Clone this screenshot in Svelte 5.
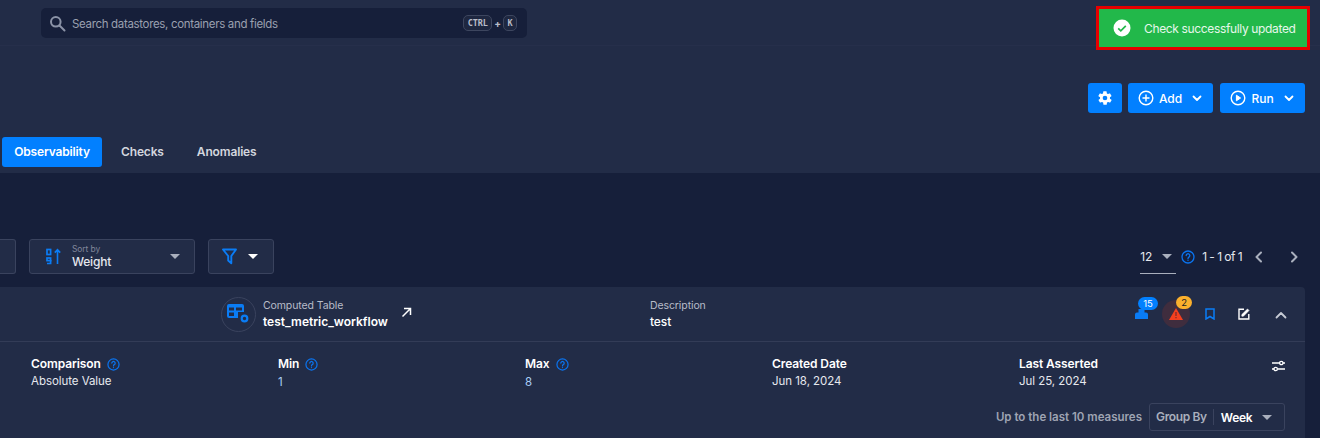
<script>
  const details = [
    { label: 'Comparison', value: 'Absolute Value', help: true },
    { label: 'Min', value: '1', help: true, link: true },
    { label: 'Max', value: '8', help: true, link: true },
    { label: 'Created Date', value: 'Jun 18, 2024' },
    { label: 'Last Asserted', value: 'Jul 25, 2024' }
  ];
</script>

{#snippet help(size)}
  <svg class="help" width={size} height={size} viewBox="0 0 14 14" fill="none" stroke="#0a74f0" stroke-width="1.3">
    <circle cx="7" cy="7" r="6" />
    <path d="M5.2 5.5a1.8 1.8 0 1 1 2.7 1.6c-.6.4-.9.7-.9 1.4" stroke-linecap="round" />
    <circle cx="7" cy="10.3" r=".7" fill="#0a74f0" stroke="none" />
  </svg>
{/snippet}

{#snippet chevron()}
  <svg width="12" height="12" viewBox="0 0 12 12" fill="none" stroke="#fff" stroke-width="1.8" stroke-linecap="round" stroke-linejoin="round">
    <path d="M2.5 4.5 6 8l3.5-3.5" />
  </svg>
{/snippet}

<div class="page">
  <header class="topbar">
    <div class="search">
      <svg width="17" height="17" viewBox="0 0 17 17" fill="none" stroke="#8b93a7" stroke-width="2">
        <circle cx="6.8" cy="6.8" r="4.8" />
        <path d="m10.5 10.5 5 5" stroke-linecap="round" />
      </svg>
      <span class="search-text">Search datastores, containers and fields</span>
      <span class="keys">
        <kbd>CTRL</kbd><i>+</i><kbd>K</kbd>
      </span>
    </div>
  </header>

  <section class="head">
    <div class="actions">
      <button class="btn icon-only" aria-label="Settings">
        <svg width="16" height="16" viewBox="0 0 24 24" fill="#fff">
          <path fill-rule="evenodd" d="M19.4 13a7.6 7.6 0 0 0 0-2l2.1-1.6a.5.5 0 0 0 .1-.7l-2-3.4a.5.5 0 0 0-.6-.2l-2.5 1a7.4 7.4 0 0 0-1.7-1l-.4-2.7a.5.5 0 0 0-.5-.4h-4a.5.5 0 0 0-.5.4l-.4 2.7a7.4 7.4 0 0 0-1.7 1l-2.5-1a.5.5 0 0 0-.6.2l-2 3.4a.5.5 0 0 0 .1.7L4.6 11a7.6 7.6 0 0 0 0 2l-2.1 1.6a.5.5 0 0 0-.1.7l2 3.4c.1.2.4.3.6.2l2.5-1c.5.4 1.1.7 1.7 1l.4 2.7c0 .2.3.4.5.4h4c.2 0 .5-.2.5-.4l.4-2.7c.6-.3 1.2-.6 1.7-1l2.5 1c.2.1.5 0 .6-.2l2-3.4a.5.5 0 0 0-.1-.7ZM12 15.5a3.5 3.5 0 1 1 0-7 3.5 3.5 0 0 1 0 7Z" />
        </svg>
      </button>
      <button class="btn">
        <svg width="16" height="16" viewBox="0 0 16 16" fill="none" stroke="#fff" stroke-width="1.4">
          <circle cx="8" cy="8" r="6.8" />
          <path d="M8 4.5v7M4.500 8h7" />
        </svg>
        <span>Add</span>
        {@render chevron()}
      </button>
      <button class="btn run">
        <svg width="16" height="16" viewBox="0 0 16 16" fill="none" stroke="#fff" stroke-width="1.4">
          <circle cx="8" cy="8" r="6.8" />
          <path d="M6.400 5.200v5.600L10.600 8Z" fill="#fff" stroke-linejoin="round" stroke-width="1" />
        </svg>
        <span>Run</span>
        {@render chevron()}
      </button>
    </div>
    <nav class="tabs">
      <span class="tab active">Observability</span>
      <span class="tab">Checks</span>
      <span class="tab">Anomalies</span>
    </nav>
  </section>

  <main class="body">
    <div class="toolbar">
      <div class="box stub"></div>
      <div class="box sort">
        <svg width="16" height="17" viewBox="0 0 16 17" fill="none" stroke="#0a7cf5">
          <rect x="1" y="1.500" width="3.600" height="5" stroke-width="1.700" />
          <rect x="1" y="10" width="3.600" height="2.600" stroke-width="1.700" />
          <path d="M4.600 12v3.500H1" stroke-width="1.700" />
          <path d="M11.500 16V2M8.800 4.600l2.700-3 2.700 3" stroke-width="1.600" />
        </svg>
        <div class="sort-text">
          <small>Sort by</small>
          <span>Weight</span>
        </div>
        <b class="caret grey"></b>
      </div>
      <div class="box filter">
        <svg width="15" height="17" viewBox="0 0 15 17" fill="none" stroke="#0a7cf5" stroke-width="1.900" stroke-linejoin="round">
          <path d="M1 1.500h13L9.300 8v7.300L6.200 12.500V8Z" />
        </svg>
        <b class="caret white"></b>
      </div>
      <div class="pager">
        <div class="per-page">
          <span>12</span>
          <b class="caret grey"></b>
        </div>
        {@render help(14)}
        <span class="range">1 - 1 of 1</span>
        <svg class="nav-prev" width="10" height="12" viewBox="0 0 10 12" fill="none" stroke="#a9afbd" stroke-width="2" stroke-linecap="round" stroke-linejoin="round">
          <path d="M7 1.500 2.500 6 7 10.500" />
        </svg>
        <svg class="nav-next" width="10" height="12" viewBox="0 0 10 12" fill="none" stroke="#a9afbd" stroke-width="2" stroke-linecap="round" stroke-linejoin="round">
          <path d="M3 1.500 7.500 6 3 10.500" />
        </svg>
      </div>
    </div>

    <article class="card">
      <div class="card-head">
        <div class="table-info">
          <div class="ring">
            <svg width="24" height="22" viewBox="0 0 24 22">
              <path fill="#0a7cf5" fill-rule="evenodd" d="M2 1h13a2 2 0 0 1 2 2v6h-6v6H2a2 2 0 0 1-2-2V3a2 2 0 0 1 2-2Zm0 3.500v3h5v-3Zm7 0v3h6v-3Zm-7 5v3.500h5V9.500Z" />
              <circle cx="17.500" cy="15.500" r="2.800" fill="none" stroke="#0a7cf5" stroke-width="2.200" />
            </svg>
          </div>
          <div class="name">
            <small>Computed Table</small>
            <strong>test_metric_workflow</strong>
          </div>
          <svg class="open" width="11" height="11" viewBox="0 0 11 11" fill="none" stroke="#fff" stroke-width="1.500">
            <path d="M1.500 9.500 9.500 1.500M3 1.500h6.500V8" />
          </svg>
        </div>
        <div class="description">
          <small>Description</small>
          <span>test</span>
        </div>
        <div class="tools">
          <div class="person">
            <svg width="13" height="10" viewBox="0 0 13 10" fill="#0a7cf5">
              <path d="M3.500 0h6v3.500H11a2 2 0 0 1 2 2V10H0V5.500a2 2 0 0 1 2-2h1.500Z" />
            </svg>
            <em class="badge blue">15</em>
          </div>
          <div class="alert">
            <svg width="14" height="12" viewBox="0 0 14 12">
              <path fill="#f4401f" d="M7 0 14 12H0Z" />
              <path fill="#7a2a2a" d="M6.400 4h1.200v4H6.400Zm0 5h1.200v1.200H6.400Z" />
            </svg>
            <em class="badge amber">2</em>
          </div>
          <svg class="bookmark" width="10" height="12" viewBox="0 0 10 12" fill="none" stroke="#0a7cf5" stroke-width="1.500">
            <path d="M1 1h8v10L5 8.500 1 11Z" />
          </svg>
          <svg class="edit" width="12" height="12" viewBox="0 0 12 12" fill="none" stroke="#fff" stroke-width="1.400">
            <path d="M6 1.200H1v9.800h9.800V6" />
            <path d="M3.800 8.200V6.600L9.500 1l1.500 1.500-5.600 5.700Z" fill="#fff" stroke-width=".6" />
          </svg>
          <svg class="collapse" width="12" height="8" viewBox="0 0 12 8" fill="none" stroke="#c6cad4" stroke-width="1.800" stroke-linecap="round" stroke-linejoin="round">
            <path d="M1.500 6.500 6 2l4.500 4.500" />
          </svg>
        </div>
      </div>

      <div class="details">
        {#each details as d}
          <div class="detail">
            <div class="label">
              <span>{d.label}</span>
              {#if d.help}{@render help(13)}{/if}
            </div>
            <div class="value" class:link={d.link}>{d.value}</div>
          </div>
        {/each}
        <svg class="tune" width="13" height="12" viewBox="0 0 13 12" fill="none" stroke="#fff" stroke-width="1.300">
          <path d="M0 3h7.500M11 3h2M0 9h2M5.500 9H13" />
          <circle cx="9.300" cy="3" r="1.700" />
          <circle cx="3.700" cy="9" r="1.700" />
        </svg>
      </div>

      <div class="chart-bar">
        <span class="measures">Up to the last 10 measures</span>
        <div class="group">
          <span class="group-label">Group By</span>
          <span class="group-value">Week</span>
          <b class="caret grey"></b>
        </div>
      </div>
    </article>
  </main>

  <div class="toast">
    <svg width="18" height="18" viewBox="0 0 18 18">
      <circle cx="9" cy="9" r="8.500" fill="#fff" />
      <path d="m5.200 9.300 2.600 2.500 5-5" fill="none" stroke="#22b84a" stroke-width="1.700" />
    </svg>
    <span>Check successfully updated</span>
  </div>
</div>

<style>
  :global(body) {
    margin: 0;
    background: #161f3a;
  }
  .page {
    position: relative;
    width: 1320px;
    height: 438px;
    overflow: hidden;
    font-family: Inter, "Noto Sans", sans-serif;
    color: #fff;
    letter-spacing: -0.1px;
  }
  small {
    display: block;
    font-size: 10.500px;
    font-weight: 400;
  }

  .topbar {
    height: 46px;
    box-sizing: border-box;
    padding: 8px 0 0 41px;
    background: #222c47;
    border-bottom: 1px solid #262f4b;
  }
  .search {
    width: 486px;
    height: 30px;
    box-sizing: border-box;
    padding: 0 10px 0 8px;
    display: flex;
    align-items: center;
    background: #161f3a;
    border-radius: 5px;
  }
  .search-text {
    margin: 2px 0 0 6px;
    font-size: 11.500px;
    color: #9aa0b0;
    letter-spacing: -0.33px;
  }
  .keys {
    margin-left: auto;
    display: flex;
    align-items: center;
    gap: 2px;
    margin-top: -1px;
    color: #b9bdc9;
  }
  kbd {
    padding: 1px 3.500px;
    border: 1px solid #3d465f;
    border-radius: 5px;
    font-family: "DejaVu Sans Mono", monospace;
    font-size: 8.500px;
    font-weight: 700;
    line-height: 12px;
    background: #1e2740;
  }
  .keys i {
    font-style: normal;
    font-size: 10px;
    font-weight: 700;
  }

  .head {
    height: 127px;
    box-sizing: border-box;
    background: #222c47;
    padding-top: 37px;
  }
  .actions {
    display: flex;
    justify-content: flex-end;
    gap: 6px;
    padding-right: 15px;
  }
  .btn {
    height: 30px;
    width: 85px;
    padding: 0 10px;
    display: flex;
    align-items: center;
    justify-content: space-between;
    background: #0280ff;
    color: #fff;
    border: 0;
    border-radius: 3px;
    font: 500 12px Inter, sans-serif;
    letter-spacing: 0;
  }
  .btn span {
    margin-left: -4px;
  }
  .run {
    margin-left: 1px;
  }
  .icon-only {
    width: 34px;
    justify-content: center;
    padding: 0;
  }
  .tabs {
    display: flex;
    margin-top: 24px;
    padding-left: 2px;
  }
  .tab {
    height: 30px;
    line-height: 30px;
    padding: 0 13px;
    margin-right: 7px;
    font-size: 12px;
    font-weight: 600;
    color: #d3d6de;
    border-radius: 3px;
    letter-spacing: -0.15px;
  }
  .tab.active {
    width: 100px;
    box-sizing: border-box;
    text-align: center;
    padding: 0;
    margin-right: 6px;
    background: #0280ff;
    color: #fff;
  }

  .body {
    height: 265px;
    padding-top: 66px;
    box-sizing: border-box;
  }
  .toolbar {
    height: 35px;
    display: flex;
    align-items: center;
    padding-right: 21px;
  }
  .box {
    height: 35px;
    box-sizing: border-box;
    background: #222c47;
    border: 1px solid #3a435e;
    border-radius: 3px;
    display: flex;
    align-items: center;
  }
  .stub {
    width: 16px;
    border-left: 0;
    border-radius: 0 3px 3px 0;
  }
  .sort {
    width: 166px;
    margin-left: 13px;
    padding: 0 9px 0 16px;
  }
  .sort-text {
    margin-left: 10px;
    flex: 1;
  }
  .sort-text small {
    font-size: 8.500px;
    line-height: 10px;
    color: #80869a;
  }
  .sort-text span {
    display: block;
    font-size: 12px;
    font-weight: 500;
    line-height: 15px;
    color: #e6e8ee;
    letter-spacing: -0.2px;
  }
  .filter {
    width: 66px;
    margin-left: 13px;
    padding-left: 13px;
    gap: 11px;
  }
  .caret {
    display: block;
    width: 0;
    height: 0;
    border-left: 5px solid transparent;
    border-right: 5px solid transparent;
  }
  .caret.grey {
    border-top: 5px solid #a9afbd;
  }
  .caret.white {
    border-top: 5px solid #fff;
  }
  .sort .caret {
    margin-right: 5px;
  }
  .pager {
    margin-left: auto;
    display: flex;
    align-items: center;
    height: 35px;
    font-size: 12px;
    color: #e6e8ee;
  }
  .per-page {
    width: 36px;
    height: 34px;
    box-sizing: border-box;
    border-bottom: 1px solid #a9afbd;
    display: flex;
    align-items: center;
    justify-content: space-between;
    padding-right: 4px;
    margin-right: 5px;
  }
  .range {
    margin-left: 7px;
    letter-spacing: -0.55px;
  }
  .nav-prev {
    margin-left: 12px;
  }
  .nav-next {
    margin-left: 25px;
  }

  .card {
    margin: 13px 15px 0 0;
    height: 151px;
    background: #222c47;
    border-radius: 0 4px 0 0;
  }
  .card-head {
    height: 55px;
    box-sizing: border-box;
    border-bottom: 1px solid #333c57;
    display: flex;
    align-items: center;
    padding-left: 221px;
  }
  .table-info {
    width: 429px;
    display: flex;
    align-items: center;
  }
  .ring {
    width: 35px;
    height: 35px;
    box-sizing: border-box;
    border: 1px solid #3a435e;
    border-radius: 50%;
    display: flex;
    align-items: center;
    justify-content: center;
  }
  .name {
    margin-left: 7px;
  }
  .name small,
  .description small {
    color: #b8bcc9;
    line-height: 14px;
  }
  .name strong {
    display: block;
    font-size: 12px;
    font-weight: 600;
    line-height: 17px;
    letter-spacing: 0;
  }
  .open {
    margin: -3px 0 0 13px;
  }
  .description span {
    display: block;
    font-size: 12px;
    font-weight: 500;
    line-height: 17px;
  }
  .tools {
    margin-left: auto;
    display: flex;
    align-items: center;
    padding-right: 18px;
  }
  .person,
  .alert {
    position: relative;
    display: flex;
    align-items: center;
    justify-content: center;
  }
  .alert {
    width: 28px;
    height: 28px;
    margin-left: 14px;
    background: #3f2d3e;
    border-radius: 50%;
  }
  .badge {
    position: absolute;
    height: 13px;
    line-height: 13px;
    border-radius: 7px;
    font-size: 9.500px;
    font-style: normal;
    text-align: center;
  }
  .badge.blue {
    left: 3px;
    top: -12px;
    width: 20px;
    background: #0280ff;
    color: #fff;
  }
  .badge.amber {
    left: 14px;
    top: -4px;
    width: 16px;
    background: #fbb02d;
    color: #222;
  }
  .bookmark {
    margin-left: 15px;
  }
  .edit {
    margin-left: 23px;
  }
  .collapse {
    margin: 1px 0 0 25px;
  }

  .details {
    position: relative;
    display: grid;
    grid-template-columns: repeat(5, 247px);
    padding: 14px 0 0 31px;
    height: 47px;
  }
  .label {
    display: flex;
    align-items: center;
    gap: 6px;
    font-size: 12px;
    font-weight: 600;
    line-height: 16px;
    letter-spacing: -0.1px;
  }
  .value {
    font-size: 11.500px;
    line-height: 18px;
    color: #e6e8ee;
    letter-spacing: -0.05px;
  }
  .value.link {
    color: #a9cff7;
    padding-top: 1px;
  }
  .tune {
    position: absolute;
    right: 20px;
    top: 18px;
  }
  .chart-bar {
    display: flex;
    justify-content: flex-end;
    align-items: center;
    padding-right: 20px;
    gap: 7px;
  }
  .measures {
    font-size: 11.500px;
    font-weight: 600;
    color: #9fa4b3;
    letter-spacing: 0;
  }
  .group {
    width: 136px;
    height: 28px;
    box-sizing: border-box;
    border: 1px solid #3a435e;
    border-radius: 3px;
    display: flex;
    align-items: center;
    padding: 0 12px 0 6px;
    font-size: 12px;
    font-weight: 600;
  }
  .group-label {
    color: #a9afbd;
    padding-right: 6px;
    border-right: 1px solid #3a435e;
    line-height: 16px;
    letter-spacing: -0.35px;
  }
  .group-value {
    margin-left: 7px;
    flex: 1;
    letter-spacing: -0.3px;
  }

  .toast {
    position: absolute;
    top: 6px;
    left: 1096px;
    width: 214px;
    height: 44px;
    box-sizing: border-box;
    border: 3px solid #e60000;
    background: #22b84a;
    display: flex;
    align-items: center;
    padding-left: 14px;
    gap: 13px;
    font-size: 12px;
    color: #e6f7ea;
    letter-spacing: -0.35px;
  }
</style>
